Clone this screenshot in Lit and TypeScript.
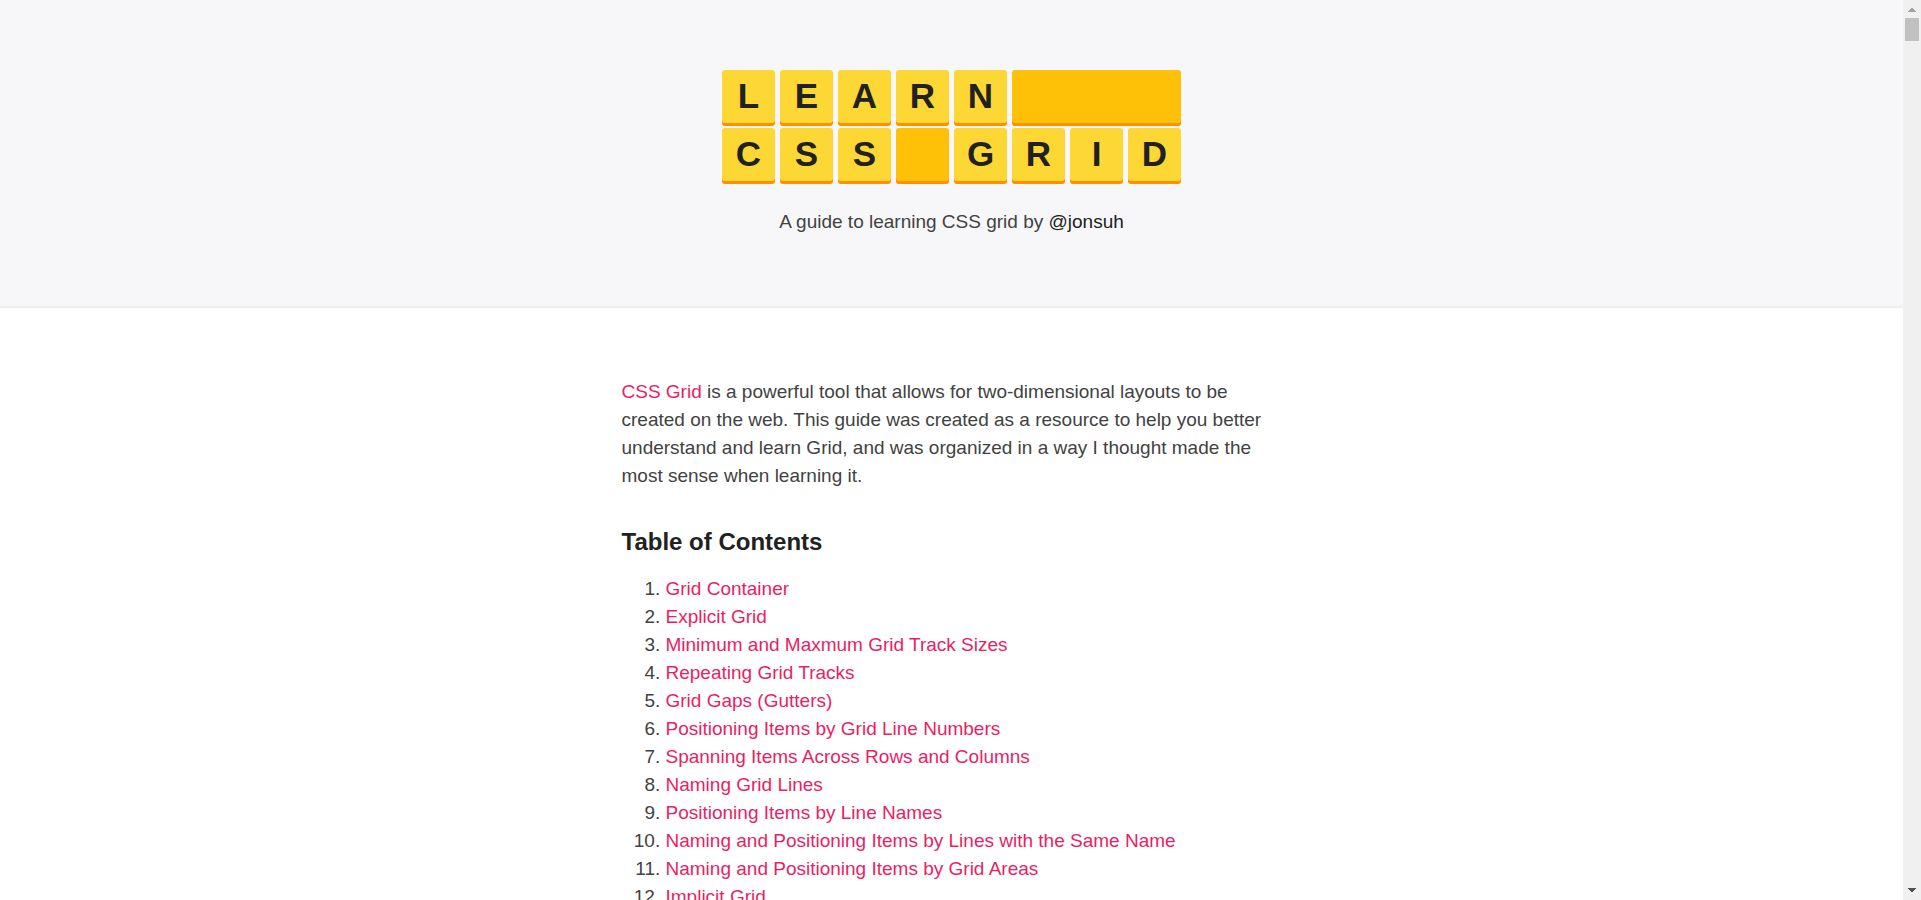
import { LitElement, html, css } from "lit";
import { customElement } from "lit/decorators.js";

const TILES = ["L", "E", "A", "R", "N", "", "C", "S", "S", "", "G", "R", "I", "D"];

const SECTIONS = [
  "Grid Container",
  "Explicit Grid",
  "Minimum and Maxmum Grid Track Sizes",
  "Repeating Grid Tracks",
  "Grid Gaps (Gutters)",
  "Positioning Items by Grid Line Numbers",
  "Spanning Items Across Rows and Columns",
  "Naming Grid Lines",
  "Positioning Items by Line Names",
  "Naming and Positioning Items by Lines with the Same Name",
  "Naming and Positioning Items by Grid Areas",
  "Implicit Grid",
];

const slug = (title: string) =>
  title.toLowerCase().replace(/[^a-z]+/g, "-").replace(/-$/, "");

@customElement("tile-logo")
export class TileLogo extends LitElement {
  static styles = css`
    :host {
      display: block;
    }
    .tiles {
      display: grid;
      grid-template-columns: repeat(8, 53px);
      grid-auto-rows: 53px;
      gap: 5px;
      justify-content: center;
      margin: 0;
      font-size: 35px;
      line-height: 51px;
      font-weight: 700;
      text-align: center;
      color: #212121;
    }
    .tile {
      border-radius: 3px;
      background: #fdd835;
      box-shadow: 0 3px 0 #ff8f00;
    }
    .blank {
      background: #ffc107;
    }
    .wide {
      grid-column: span 3;
    }
  `;

  render() {
    return html`<h1 class="tiles" aria-label="Learn CSS Grid">
      ${TILES.map(
        (letter, i) =>
          html`<span class="tile ${letter ? "" : "blank"} ${i === 5 ? "wide" : ""}">${letter}</span>`
      )}
    </h1>`;
  }
}

@customElement("scroll-rail")
export class ScrollRail extends LitElement {
  static styles = css`
    :host {
      display: flex;
      flex-direction: column;
      align-items: center;
      box-sizing: border-box;
      padding: 8px 0;
      background: #f0f0f0;
    }
    .arrow {
      display: block;
      width: 8px;
      height: 4px;
    }
    .up {
      fill: #a3a3a3;
    }
    .down {
      fill: #505050;
    }
    .track {
      flex: 1;
      width: 14px;
      padding: 6px 0;
    }
    .thumb {
      height: 23px;
      background: #c1c1c1;
    }
  `;

  render() {
    return html`
      <svg class="arrow up" viewBox="0 0 8 4" shape-rendering="crispEdges">
        <path d="M3 0h2v1h1v1h1v1h1v1H0V3h1V2h1V1h1z" />
      </svg>
      <div class="track"><div class="thumb"></div></div>
      <svg class="arrow down" viewBox="0 0 8 4" shape-rendering="crispEdges">
        <path d="M0 0h8v1H7v1H6v1H5v1H3V3H2V2H1V1H0z" />
      </svg>
    `;
  }
}

@customElement("app-root")
export class AppRoot extends LitElement {
  static styles = css`
    :host {
      display: grid;
      grid-template-columns: minmax(0, 1fr) 18px;
      height: 100vh;
      background: #fff;
      color: #424242;
      font-family: "Liberation Sans", Arial, sans-serif;
      font-size: 19px;
      line-height: 28px;
    }
    .page {
      overflow-y: auto;
      scrollbar-width: none;
    }
    .header {
      padding: 70px 20px;
      border-bottom: 2px solid #eeeeee;
      background: #f7f7fa;
      text-align: center;
    }
    .tagline {
      margin: 27px 0 0;
    }
    .author {
      color: #212121;
      text-decoration: none;
    }
    .content {
      max-width: 660px;
      margin: 0 auto;
      padding: 70px 20px;
    }
    .intro {
      margin: 0;
    }
    .heading {
      margin: 36px 0 17px;
      font-size: 24px;
      line-height: 32px;
      color: #212121;
    }
    .contents {
      margin: 0;
      padding-left: 44px;
    }
    .link {
      color: #e91e63;
      text-decoration: none;
    }
    .link:hover,
    .author:hover {
      text-decoration: underline;
    }
  `;

  render() {
    return html`
      <div class="page">
        <header class="header">
          <tile-logo></tile-logo>
          <p class="tagline">
            A guide to learning CSS grid by <a class="author" href="#jonsuh">@jonsuh</a>
          </p>
        </header>
        <main class="content">
          <p class="intro">
            <a class="link" href="#css-grid">CSS Grid</a> is a powerful tool that allows for
            two-dimensional layouts to be created on the web. This guide was created as a
            resource to help you better understand and learn Grid, and was organized in a way I
            thought made the most sense when learning it.
          </p>
          <h2 class="heading">Table of Contents</h2>
          <ol class="contents">
            ${SECTIONS.map(
              (title) => html`<li><a class="link" href="#${slug(title)}">${title}</a></li>`
            )}
          </ol>
        </main>
      </div>
      <scroll-rail aria-hidden="true"></scroll-rail>
    `;
  }
}
